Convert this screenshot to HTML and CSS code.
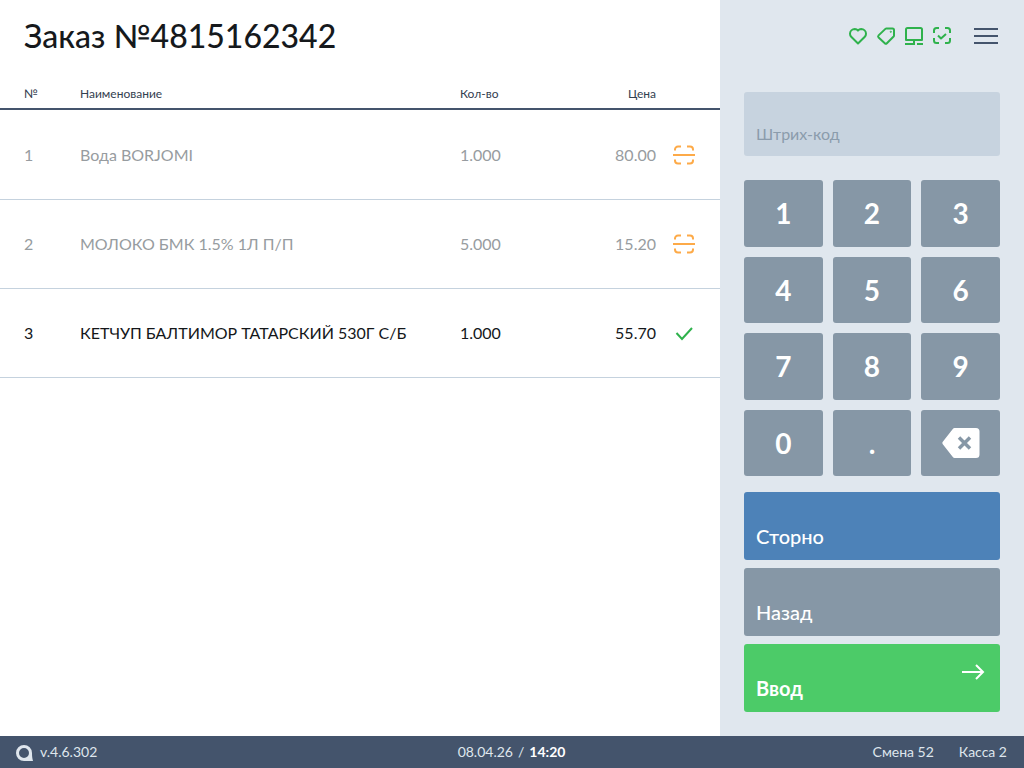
FILE: index.html
```html
<!DOCTYPE html>
<html lang="ru">
<head>
<meta charset="utf-8">
<title>Заказ</title>
<link rel="stylesheet" href="styles.css">
</head>
<body>
<div class="app">
  <main class="main">
    <h1 class="title">Заказ №4815162342</h1>
    <div class="row head">
      <div class="c-n">№</div><div class="c-name">Наименование</div><div class="c-qty">Кол-во</div><div class="c-price">Цена</div><div class="c-st"></div>
    </div>
    <div class="row item dim">
      <div class="c-n">1</div><div class="c-name">Вода BORJOMI</div><div class="c-qty">1.000</div><div class="c-price">80.00</div>
      <div class="c-st"><svg class="ic" width="24" height="24" viewBox="0 0 24 24" fill="none" stroke="#fdaa48" stroke-width="2"><path d="M1 12h22M3 7.500v-1a3 3 0 0 1 3-3h3M15 3.500h3a3 3 0 0 1 3 3v1M3 16.500v1a3 3 0 0 0 3 3h3M15 20.500h3a3 3 0 0 0 3-3v-1"/></svg></div>
    </div>
    <div class="row item dim">
      <div class="c-n">2</div><div class="c-name">МОЛОКО БМК 1.5% 1Л П/П</div><div class="c-qty">5.000</div><div class="c-price">15.20</div>
      <div class="c-st"><svg class="ic" width="24" height="24" viewBox="0 0 24 24" fill="none" stroke="#fdaa48" stroke-width="2"><path d="M1 12h22M3 7.500v-1a3 3 0 0 1 3-3h3M15 3.500h3a3 3 0 0 1 3 3v1M3 16.500v1a3 3 0 0 0 3 3h3M15 20.500h3a3 3 0 0 0 3-3v-1"/></svg></div>
    </div>
    <div class="row item">
      <div class="c-n">3</div><div class="c-name">КЕТЧУП БАЛТИМОР ТАТАРСКИЙ 530Г С/Б</div><div class="c-qty">1.000</div><div class="c-price">55.70</div>
      <div class="c-st"><svg class="ic" width="24" height="24" viewBox="0 0 24 24" fill="none" stroke="#2fb24c" stroke-width="2"><path d="M4.500 12l5.500 6L20 7"/></svg></div>
    </div>
  </main>
  <aside class="side">
    <div class="top">
      <svg width="20" height="20" viewBox="0 0 20 20" fill="none" stroke="#2fb24c" stroke-width="2" stroke-linejoin="round"><path d="M10 17.500L3.200 10.700A4.300 4.300 0 0 1 2 7.700 4.800 4.800 0 0 1 6.800 3 4.600 4.600 0 0 1 10 4.600 4.600 4.600 0 0 1 13.200 3 4.800 4.800 0 0 1 18 7.700a4.300 4.300 0 0 1-1.200 3z"/></svg>
      <svg width="20" height="20" viewBox="0 0 20 20" fill="none" stroke="#2fb24c" stroke-width="2" stroke-linejoin="round"><path d="M10.500 2.500H16.500a1.500 1.500 0 0 1 1.500 1.500V9.500a1.500 1.500 0 0 1-.4 1l-6.700 6.700a1.500 1.500 0 0 1-2.100 0L2.600 11.500a1.500 1.500 0 0 1 0-2.100L9.400 2.900a1.500 1.500 0 0 1 1.100-.4z"/><circle cx="14.800" cy="5.800" r=".6" stroke-width="1"/></svg>
      <svg width="20" height="20" viewBox="0 0 20 20" fill="none" stroke="#2fb24c" stroke-width="2" stroke-linejoin="round"><path d="M3.500 2h13A1.500 1.500 0 0 1 18 3.500V14H2V3.500A1.500 1.500 0 0 1 3.500 2zM10 14v4M1 18h10M13 18h6"/></svg>
      <svg width="20" height="20" viewBox="0 0 20 20" fill="none" stroke="#2fb24c" stroke-width="2" stroke-linejoin="round"><path d="M2 7V4.500A2.500 2.500 0 0 1 4.500 2H7M13 2h2.500A2.500 2.500 0 0 1 18 4.500V7M2 12v2.500A2.500 2.500 0 0 0 4.500 17H7M13 17h2.500a2.500 2.500 0 0 0 2.500-2.500V12M6 9.500l3 3 5-4.500"/></svg>
      <div class="burger"><span></span><span></span><span></span></div>
    </div>
    <div class="field">Штрих-код</div>
    <div class="pad">
      <button class="key">1</button><button class="key">2</button><button class="key">3</button>
      <button class="key">4</button><button class="key">5</button><button class="key">6</button>
      <button class="key">7</button><button class="key">8</button><button class="key">9</button>
      <button class="key">0</button><button class="key">.</button>
      <button class="key"><svg width="38" height="32" viewBox="0 0 38 32"><path d="M12.500 1h21.500a3.500 3.500 0 0 1 3.500 3.500v23a3.500 3.500 0 0 1-3.500 3.500H12.500a2 2 0 0 1-1.500-.7L.8 17.200a2 2 0 0 1 0-2.400L11 1.700a2 2 0 0 1 1.500-.7z" fill="#fff"/><path d="M17 10.500l11 11M28 10.500l-11 11" stroke="#8697a6" stroke-width="3.500"/></svg></button>
    </div>
    <div class="actions">
      <button class="act blue">Сторно</button>
      <button class="act gray">Назад</button>
      <button class="act green">Ввод<svg class="arrow" width="24" height="16" viewBox="0 0 24 16" fill="none" stroke="#fff" stroke-width="2"><path d="M1 8h21M15 1l7 7-7 7"/></svg></button>
    </div>
  </aside>
  <footer class="foot">
    <div class="f-left"><svg class="logo" width="18" height="16" viewBox="0 0 18 16"><path fill="#dfe6ed" fill-rule="evenodd" d="M8 0a8 8 0 0 1 8 8c0 3 .3 5.500 1 8H8A8 8 0 0 1 8 0zM8 3a5 5 0 1 0 0 10 5 5 0 0 0 0-10z"/></svg><span>v.4.6.302</span></div>
    <div class="f-mid">08.04.26<span class="sep">/</span><b>14:20</b></div>
    <div class="f-right"><span>Смена 52</span><span>Касса 2</span></div>
  </footer>
</div>
</body>
</html>
```
FILE: styles.css
```css
* { box-sizing: border-box; }
html, body { margin: 0; height: 100%; }
body { font-family: Lato, "Noto Sans", sans-serif; color: #111; background: #fff; }
.app { width: 1024px; height: 768px; display: grid; grid-template-columns: 720px 304px; grid-template-rows: 736px 32px; overflow: hidden; }
.main { background: #fff; }
.title { margin: 0; padding: 16px 24px 0; height: 76px; font-size: 32px; line-height: 40px; font-weight: 500; color: #16191c; }
.row { display: flex; align-items: center; }
.c-n { width: 80px; padding-left: 24px; flex: none; }
.c-name { width: 380px; flex: none; }
.c-qty { width: 100px; flex: none; }
.c-price { width: 96px; flex: none; text-align: right; }
.c-st { flex: 1; display: flex; justify-content: center; padding: 2px 8px 0 0; }
.ic { display: block; }
.head { height: 34px; margin-bottom: 1px; border-bottom: 2px solid #44546c; font-size: 12px; color: #33404f; padding-top: 2px; }
.item { height: 89px; border-bottom: 1px solid #c5d2de; font-size: 16px; color: #14171a; padding-bottom: 2px; }
.dim { color: #979ca0; }
.side { background: #e0e7ee; padding: 0 24px; }
.top { height: 72px; display: flex; align-items: center; gap: 8px; padding-left: 104px; }
.burger { margin-left: 14px; width: 24px; display: flex; flex-direction: column; gap: 5px; }
.burger span { display: block; height: 2px; background: #44546c; }
.field { margin-top: 20px; height: 64px; background: #c7d3df; border-radius: 3px; color: #8b9cac; font-size: 16px; padding: 32px 12px 0; line-height: 20px; }
.pad { margin-top: 24px; display: grid; grid-template-columns: repeat(3, 1fr); grid-auto-rows: 66.5px; gap: 10px; }
button { border: 0; font-family: inherit; color: #fff; border-radius: 3px; padding: 0; }
.key { background: #8697a6; font-size: 28px; font-weight: 700; display: flex; align-items: center; justify-content: center; }
.actions { margin-top: 16px; display: flex; flex-direction: column; gap: 8px; }
.act { position: relative; height: 68px; display: flex; align-items: flex-end; padding: 0 12px 12px; font-size: 20px; line-height: 24px; font-weight: 500; }
.blue { background: #4d82b8; }
.gray { background: #8697a6; }
.green { background: #4ccb68; font-weight: 700; }
.arrow { position: absolute; right: 15px; top: 20px; }
.foot { grid-column: 1 / 3; background: #44546c; color: #dfe6ed; font-size: 14px; display: grid; grid-template-columns: 1fr auto 1fr; align-items: center; padding: 0 17px 2px 16px; }
.f-left { display: flex; align-items: center; gap: 6px; }
.logo { margin-top: 3px; }
.sep { margin: 0 5px; }
.f-mid b { color: #fff; }
.f-right { display: flex; justify-content: flex-end; gap: 25px; }
```
